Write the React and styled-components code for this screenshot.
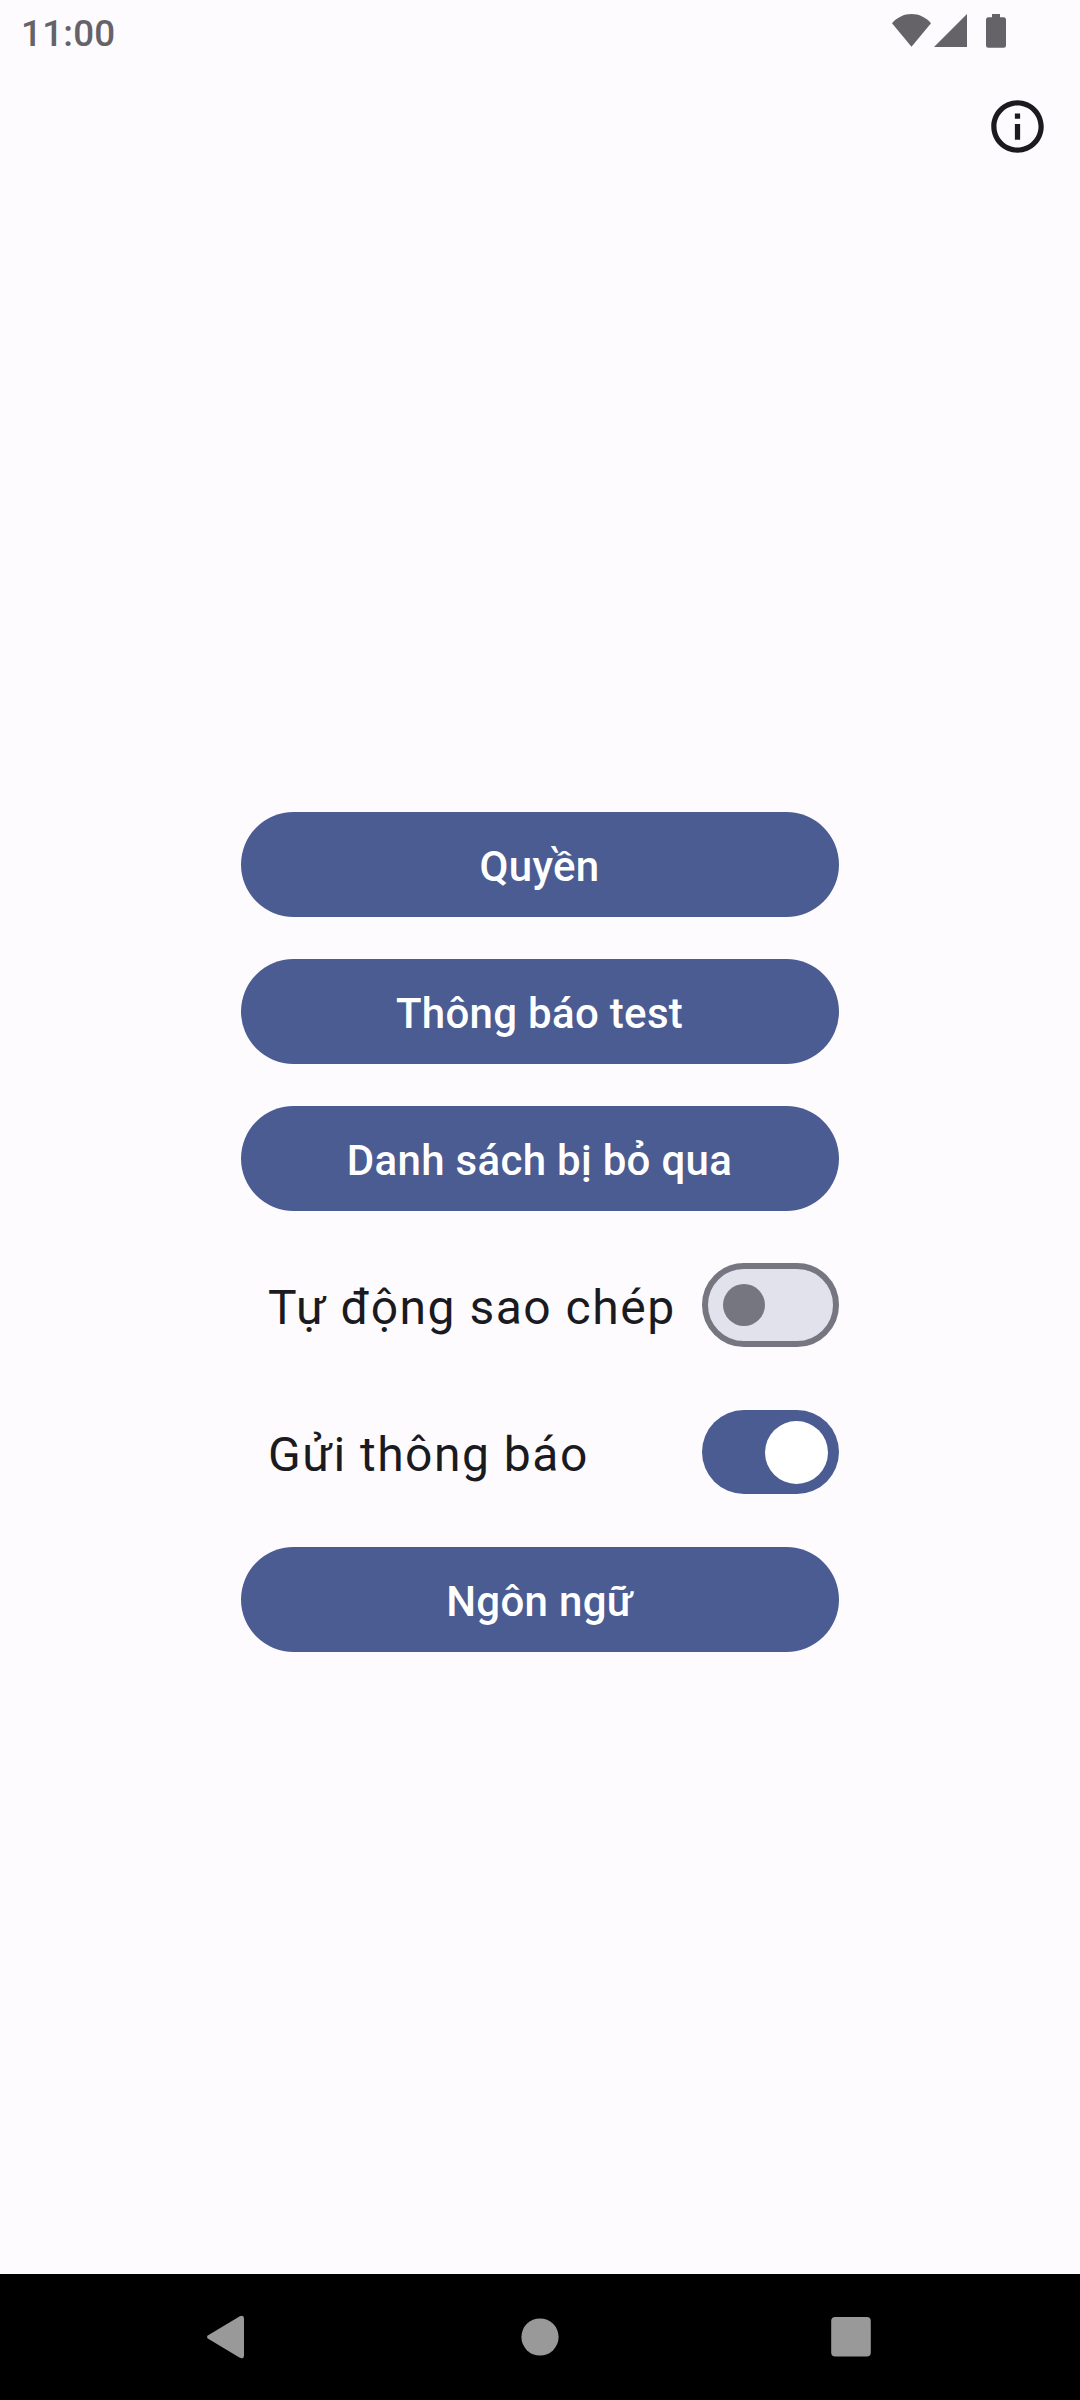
import React, { useState } from "react";
import styled, { createGlobalStyle } from "styled-components";

const colors = {
  surface: "#fefbff",
  onSurface: "#1b1b1f",
  primary: "#4a5c92",
  outline: "#757680",
  track: "#e1e2ec",
  status: "#656367",
  nav: "#999999",
};

const GlobalStyle = createGlobalStyle`
  *, *::before, *::after { box-sizing: border-box; }
  body {
    margin: 0;
    background: ${colors.surface};
    font-family: Roboto, "Noto Sans", sans-serif;
  }
`;

const Screen = styled.div`
  display: flex;
  flex-direction: column;
  width: 1080px;
  height: 2400px;
  background: ${colors.surface};
  color: ${colors.onSurface};
`;

const StatusBar = styled.header`
  display: flex;
  justify-content: space-between;
  height: 63px;
  padding: 0 74px 0 21px;
  color: ${colors.status};
`;

const Clock = styled.span`
  padding-top: 12px;
  font-size: 36.75px;
  font-weight: 500;
  line-height: 43px;
  letter-spacing: 0.25px;
`;

const StatusIcons = styled.div`
  display: flex;
  padding-top: 14px;
  svg { display: block; fill: currentColor; }
`;

const SignalIcon = styled.svg`
  margin: 0 19px 0 3px;
`;

const TopBar = styled.div`
  display: flex;
  justify-content: flex-end;
  height: 126px;
  padding: 32px 31px 0 0;
`;

const IconButton = styled.button`
  width: 63px;
  height: 63px;
  padding: 0;
  border: 0;
  background: none;
  color: inherit;
  svg { display: block; fill: currentColor; }
`;

const Content = styled.main`
  display: flex;
  flex: 1;
  flex-direction: column;
  align-items: center;
  padding-top: 602px;
`;

const Menu = styled.div`
  display: flex;
  flex-direction: column;
  width: 598px;
`;

const FilledButton = styled.button`
  height: 105px;
  margin: 21px 0;
  padding: 4px 1px 0 0;
  border: 0;
  border-radius: 52.5px;
  background: ${colors.primary};
  color: #fff;
  font: 500 42px/60px Roboto, "Noto Sans", sans-serif;
  letter-spacing: 0.3px;
`;

const SettingRow = styled.label`
  display: flex;
  align-items: center;
  justify-content: space-between;
  height: 147px;
  padding: 0 0 1px 27px;
`;

const SettingText = styled.span`
  padding-top: 6px;
  font-size: 48px;
  line-height: 72px;
  letter-spacing: 1.5px;
  white-space: nowrap;
`;

const Track = styled.button`
  display: flex;
  align-items: center;
  justify-content: ${(p) => (p.$on ? "flex-end" : "flex-start")};
  width: 137px;
  height: 84px;
  padding: ${(p) => (p.$on ? "0 11px" : "0 15px")};
  border: ${(p) => (p.$on ? "0" : `6px solid ${colors.outline}`)};
  border-radius: 42px;
  background: ${(p) => (p.$on ? colors.primary : colors.track)};
`;

const Thumb = styled.span`
  width: ${(p) => (p.$on ? 63 : 42)}px;
  height: ${(p) => (p.$on ? 63 : 42)}px;
  border-radius: 50%;
  background: ${(p) => (p.$on ? "#fff" : colors.outline)};
`;

const NavBar = styled.nav`
  display: flex;
  align-items: center;
  justify-content: space-between;
  height: 126px;
  padding: 0 194px 1px;
  background: #000;
  color: ${colors.nav};
`;

function Setting({ label, initial }) {
  const [on, setOn] = useState(initial);
  return (
    <SettingRow>
      <SettingText>{label}</SettingText>
      <Track
        type="button"
        role="switch"
        aria-checked={on}
        $on={on}
        onClick={() => setOn(!on)}
      >
        <Thumb $on={on} />
      </Track>
    </SettingRow>
  );
}

export default function App() {
  return (
    <>
      <GlobalStyle />
      <Screen>
        <StatusBar>
          <Clock>11:00</Clock>
          <StatusIcons>
            <svg width="39" height="34" viewBox="0 0 39 34">
              <path d="M0 9.2C5.2 3.3 12 0 19.5 0S33.8 3.3 39 9.2L19.5 32.7Z" />
            </svg>
            <SignalIcon width="33" height="34" viewBox="0 0 33 34">
              <path d="M0 33 33 0V33Z" />
            </SignalIcon>
            <svg width="20" height="34" viewBox="0 0 20 34">
              <path d="M6 0h8v3.3h3.5a2.5 2.5 0 0 1 2.5 2.5v25.5a2.5 2.5 0 0 1-2.5 2.5h-15a2.5 2.5 0 0 1-2.5-2.5V5.8a2.5 2.5 0 0 1 2.5-2.5H6Z" />
            </svg>
          </StatusIcons>
        </StatusBar>
        <TopBar>
          <IconButton type="button">
            <svg width="63" height="63" viewBox="0 0 24 24">
              <path d="M11 7h2v2h-2zm0 4h2v6h-2zm1-9C6.48 2 2 6.48 2 12s4.48 10 10 10 10-4.48 10-10S17.52 2 12 2zm0 18c-4.41 0-8-3.59-8-8s3.59-8 8-8 8 3.59 8 8-3.59 8-8 8z" />
            </svg>
          </IconButton>
        </TopBar>
        <Content>
          <Menu>
            <FilledButton type="button">Quyền</FilledButton>
            <FilledButton type="button">Thông báo test</FilledButton>
            <FilledButton type="button">Danh sách bị bỏ qua</FilledButton>
            <Setting label="Tự động sao chép" initial={false} />
            <Setting label="Gửi thông báo" initial={true} />
            <FilledButton type="button">Ngôn ngữ</FilledButton>
          </Menu>
        </Content>
        <NavBar>
          <svg width="63" height="63" viewBox="0 0 63 63" fill="currentColor">
            <path d="M14.2 30.2 45.8 11.3Q50 9.7 50 13.5V50.5Q50 54.3 45.8 52.7L14.2 33.8Q11.8 32 14.2 30.2Z" />
          </svg>
          <svg width="63" height="63" viewBox="0 0 63 63" fill="currentColor">
            <circle cx="31" cy="32" r="18.6" />
          </svg>
          <svg width="63" height="63" viewBox="0 0 63 63" fill="currentColor">
            <rect x="8.2" y="12" width="39.6" height="39.6" rx="4" />
          </svg>
        </NavBar>
      </Screen>
    </>
  );
}
